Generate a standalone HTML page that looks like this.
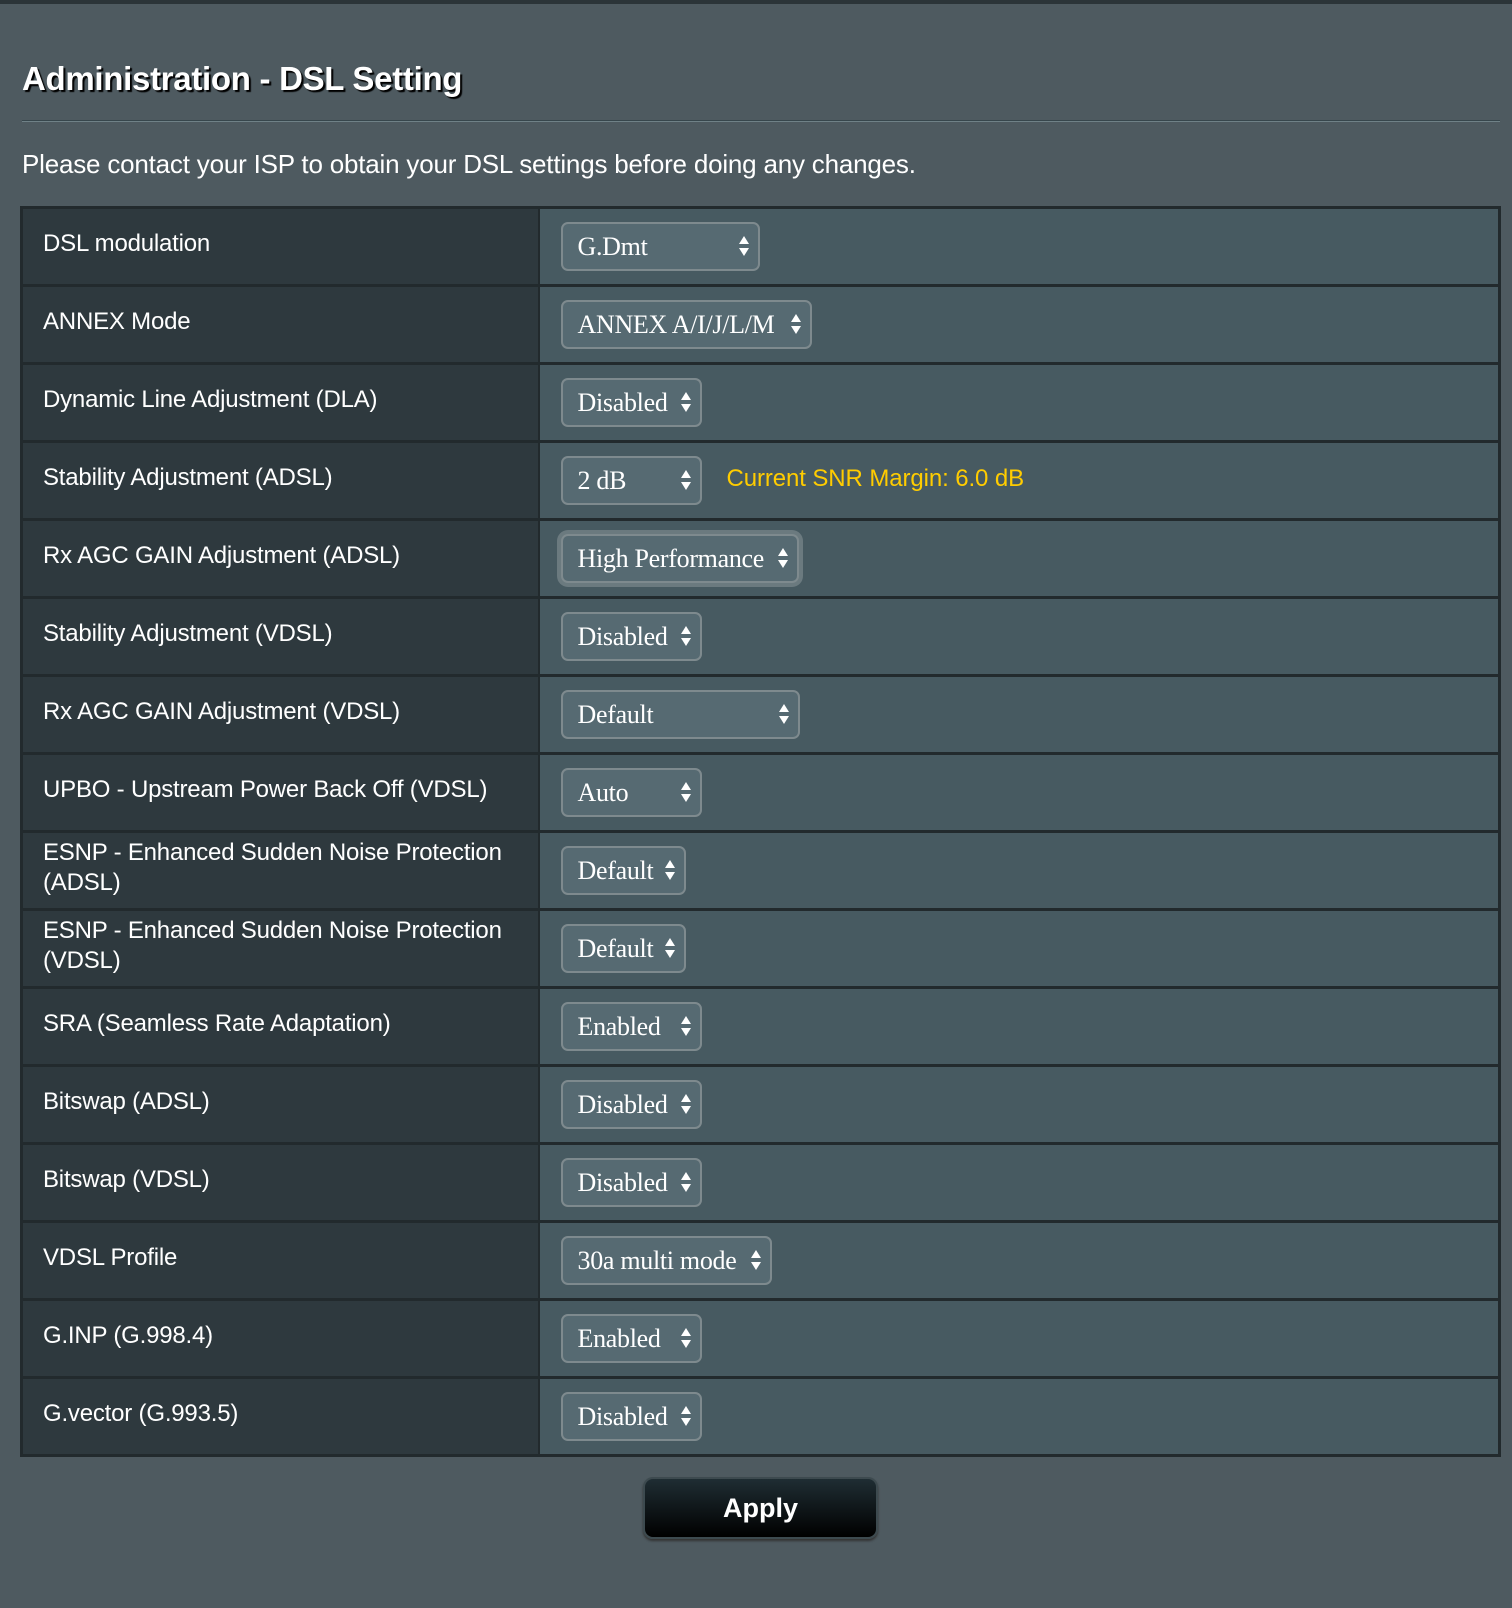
<!DOCTYPE html>
<html><head><meta charset="utf-8"><style>
*{margin:0;padding:0;box-sizing:border-box}
body{width:1512px;height:1608px;background:#4e5a60;font-family:"Liberation Sans",sans-serif;color:#fff;position:relative;overflow:hidden}
.top{position:absolute;left:0;top:0;width:1512px;height:4px;background:#2b3438}
h1{position:absolute;left:22px;top:60px;font-size:33px;font-weight:bold;letter-spacing:-0.3px;text-shadow:2px 2px 1px #000}
.hr{position:absolute;left:22px;top:120px;width:1478px;height:2px;background:#37464c;border-bottom:1px solid #6f8187}
.note{position:absolute;left:22px;top:149px;font-size:26px;letter-spacing:-0.2px}
table{position:absolute;left:20px;top:206px;width:1481px;border-collapse:collapse;border:3px solid #222a2d}
td{height:78px;border-top:3px solid #222a2d;vertical-align:middle}
td.l{width:517px;background:#2e393e;padding-left:20px;padding-bottom:5px;font-size:24px;letter-spacing:-0.2px;line-height:30px;border-right:2px solid #222a2d}
td.v{background:#475a61;padding-left:21px}
.s{display:inline-block;height:49px;border:2px solid #7e8a8e;border-radius:7px;background:#566a72;font-family:"Liberation Serif",serif;font-size:26px;line-height:45px;padding-left:15px;position:relative;vertical-align:middle;letter-spacing:-0.3px}
.s:after{content:"";position:absolute;right:9px;top:12px;border:5px solid transparent;border-bottom:8px solid #fff;border-top:0}
.s:before{content:"";position:absolute;right:9px;top:24px;border:5px solid transparent;border-top:8px solid #fff;border-bottom:0}
.f{box-shadow:0 0 0 4px #6b7a7f}
.snr{display:inline-block;vertical-align:middle;margin-left:25px;color:#ffcc00;font-size:24px;letter-spacing:-0.1px;position:relative;top:-2px}
.btn{position:absolute;left:643px;top:1477px;width:235px;height:62px;border-radius:10px;background:linear-gradient(#1f2d33,#000);border:2px solid #3d4a4f;box-shadow:0 2px 2px #333;font-weight:bold;font-size:27px;text-align:center;line-height:58px}
</style></head><body>
<div class="top"></div>
<h1>Administration - DSL Setting</h1>
<div class="hr"></div>
<div class="note">Please contact your ISP to obtain your DSL settings before doing any changes.</div>
<table>
<tr><td class="l" style="border-top:0">DSL modulation</td><td class="v" style="border-top:0"><span class="s" style="width:199px">G.Dmt</span></td></tr>
<tr><td class="l">ANNEX Mode</td><td class="v"><span class="s" style="width:251px">ANNEX A/I/J/L/M</span></td></tr>
<tr><td class="l">Dynamic Line Adjustment (DLA)</td><td class="v"><span class="s" style="width:141px">Disabled</span></td></tr>
<tr><td class="l">Stability Adjustment (ADSL)</td><td class="v"><span class="s" style="width:141px">2 dB</span><span class="snr">Current SNR Margin: 6.0 dB</span></td></tr>
<tr><td class="l">Rx AGC GAIN Adjustment (ADSL)</td><td class="v"><span class="s f" style="width:238px">High Performance</span></td></tr>
<tr><td class="l">Stability Adjustment (VDSL)</td><td class="v"><span class="s" style="width:141px">Disabled</span></td></tr>
<tr><td class="l">Rx AGC GAIN Adjustment (VDSL)</td><td class="v"><span class="s" style="width:239px">Default</span></td></tr>
<tr><td class="l">UPBO - Upstream Power Back Off (VDSL)</td><td class="v"><span class="s" style="width:141px">Auto</span></td></tr>
<tr><td class="l">ESNP - Enhanced Sudden Noise Protection<br>(ADSL)</td><td class="v"><span class="s" style="width:125px">Default</span></td></tr>
<tr><td class="l">ESNP - Enhanced Sudden Noise Protection<br>(VDSL)</td><td class="v"><span class="s" style="width:125px">Default</span></td></tr>
<tr><td class="l">SRA (Seamless Rate Adaptation)</td><td class="v"><span class="s" style="width:141px">Enabled</span></td></tr>
<tr><td class="l">Bitswap (ADSL)</td><td class="v"><span class="s" style="width:141px">Disabled</span></td></tr>
<tr><td class="l">Bitswap (VDSL)</td><td class="v"><span class="s" style="width:141px">Disabled</span></td></tr>
<tr><td class="l">VDSL Profile</td><td class="v"><span class="s" style="width:211px">30a multi mode</span></td></tr>
<tr><td class="l">G.INP (G.998.4)</td><td class="v"><span class="s" style="width:141px">Enabled</span></td></tr>
<tr><td class="l">G.vector (G.993.5)</td><td class="v"><span class="s" style="width:141px">Disabled</span></td></tr>
</table>
<div class="btn">Apply</div>
</body></html>
